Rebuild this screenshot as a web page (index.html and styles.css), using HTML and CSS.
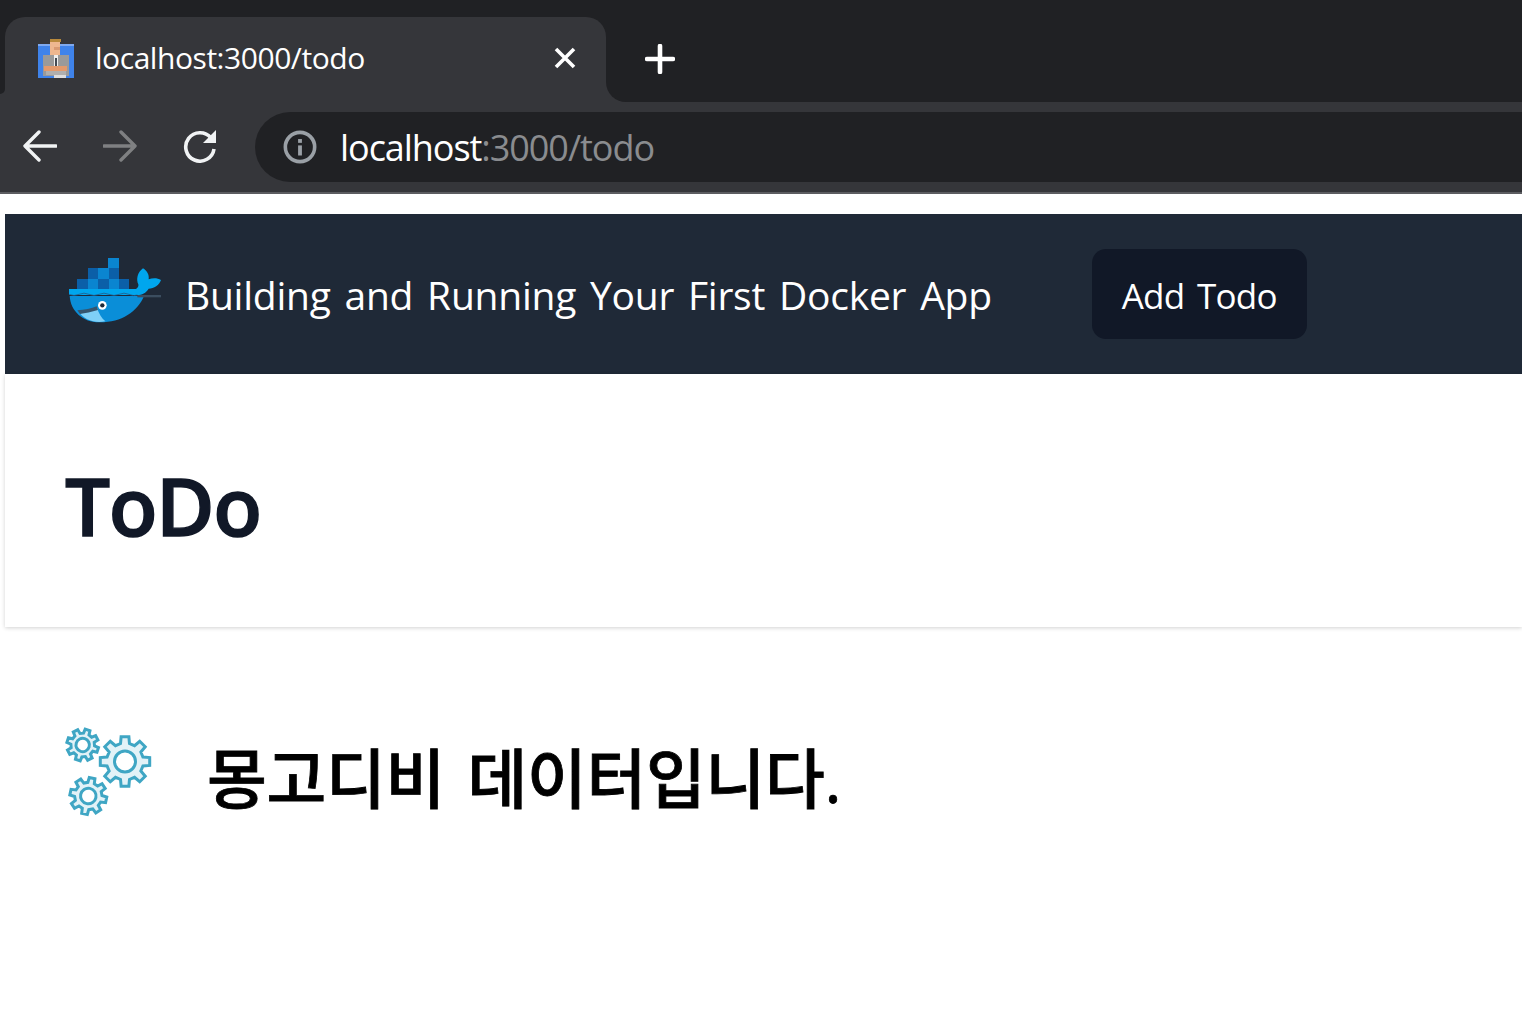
FILE: index.html
```html
<!DOCTYPE html>
<html lang="ko">
<head>
    <meta charset="UTF-8">
    <meta name="viewport" content="width=device-width, initial-scale=1.0">
    <title>ToDo</title>
    <link rel="stylesheet" href="styles.css">
</head>
<body>
    <div class="browser">
        <div class="tabstrip">
            <div class="strip-gap"></div>
            <div class="tab-slot">
                <div class="tab">
                    <svg class="favicon" viewBox="48 40 116 122" shape-rendering="crispEdges">
                        <rect x="52" y="58" width="106" height="100" fill="#3f83ea"/>
                        <rect x="52" y="58" width="106" height="6" fill="#7fa9ee"/>
                        <rect x="88" y="42" width="32" height="11" fill="#b98a3c"/>
                        <rect x="88" y="53" width="28" height="37" fill="#eeb78f"/>
                        <rect x="100" y="66" width="16" height="10" fill="#d99a72"/>
                        <rect x="67" y="92" width="76" height="60" fill="#9a9a9a"/>
                        <rect x="98" y="92" width="12" height="56" fill="#eeeeee"/>
                        <rect x="102" y="100" width="5" height="22" fill="#444a52"/>
                        <rect x="70" y="124" width="68" height="13" fill="#e39a6c"/>
                        <rect x="76" y="137" width="58" height="13" fill="#b0afae"/>
                        <rect x="100" y="150" width="34" height="8" fill="#dddddd"/>
                    </svg>
                    <span class="tab-title">localhost:3000/todo</span>
                    <svg class="tab-close" viewBox="0 0 22 22">
                        <path d="M2 2L20 20M20 2L2 20" stroke="#fff" stroke-width="3.6" fill="none"/>
                    </svg>
                </div>
            </div>
            <div class="strip-rest">
                <svg class="new-tab" viewBox="0 0 30 30">
                    <path d="M15 2V28M2 15H28" stroke="#fff" stroke-width="4.6" stroke-linecap="round" fill="none"/>
                </svg>
            </div>
        </div>
        <div class="toolbar">
            <svg class="nav-icon" viewBox="0 0 34 32">
                <path d="M33 16H3M16 2L2 16L16 30" stroke="#f1f3f4" stroke-width="3.4" stroke-linecap="round" stroke-linejoin="round" fill="none"/>
            </svg>
            <svg class="nav-icon nav-forward" viewBox="0 0 34 32">
                <path d="M1 16H31M18 2L32 16L18 30" stroke="#7f8082" stroke-width="3.4" stroke-linecap="round" stroke-linejoin="round" fill="none"/>
            </svg>
            <svg class="nav-icon nav-reload" viewBox="0 0 34 34">
                <path d="M28 9A14.2 14.2 0 1 0 31 20" stroke="#f1f3f4" stroke-width="3.6" fill="none"/>
                <path d="M33 1V14H20Z" fill="#f1f3f4"/>
            </svg>
            <div class="omnibox">
                <svg class="info-icon" viewBox="0 0 32 32">
                    <circle cx="16" cy="16" r="13.8" stroke="#9aa0a6" stroke-width="3.4" fill="none"/>
                    <rect x="14.2" y="14.5" width="3.6" height="9.5" fill="#9aa0a6"/>
                    <rect x="14.2" y="8.5" width="3.6" height="3.6" fill="#9aa0a6"/>
                </svg>
                <span class="url">localhost<span class="url-rest">:3000/todo</span></span>
            </div>
        </div>
    </div>

    <div class="page">
        <nav class="nav">
            <svg class="docker-logo" viewBox="57 36 276 198">
                <g shape-rendering="crispEdges">
                    <rect x="175" y="38" width="32" height="31" fill="#0a85d0"/>
                    <rect x="113" y="70" width="31" height="31" fill="#0b5fa8"/>
                    <rect x="144" y="70" width="32" height="31" fill="#0a85d0"/>
                    <rect x="176" y="70" width="31" height="31" fill="#0b5fa8"/>
                    <rect x="82" y="101" width="31" height="31" fill="#0b5fa8"/>
                    <rect x="113" y="101" width="31" height="31" fill="#0a85d0"/>
                    <rect x="144" y="101" width="32" height="31" fill="#0b5fa8"/>
                    <rect x="176" y="101" width="31" height="31" fill="#0a85d0"/>
                    <rect x="207" y="101" width="31" height="31" fill="#0b5fa8"/>
                </g>
                <path d="M59 153C62 200 100 233 150 232C215 232 262 200 282 153Z" fill="#0a8ed8"/>
                <path d="M86 200C105 197 125 194 141 188C146 205 155 220 166 229C130 236 102 222 86 200Z" fill="#7fd0f7"/>
                <path d="M82 196C103 195 125 190 140 184L144 195C125 201 105 205 90 207Z" fill="#35556e"/>
                <path d="M57 132H258C264 128 266 124 265 118C258 104 262 82 279 70C292 78 298 90 296 103C308 98 322 98 333 105C328 120 312 131 296 131C288 144 276 150 262 150H57Z" fill="#00a6ee"/>
                <path d="M57 148Q72 155 87 148T117 148T147 148T177 148T207 148T237 148T262 150" fill="none" stroke="#1f5f8e" stroke-width="2.5"/>
                <rect x="262" y="150" width="71" height="7" fill="#3b4d5f"/>
                <circle cx="157" cy="181" r="13" fill="#fff"/>
                <circle cx="157" cy="181" r="6.5" fill="#1f2937"/>
            </svg>
            <span class="nav-title">Building and Running Your First Docker App</span>
            <a class="nav-button">Add Todo</a>
        </nav>
        <header class="header">
            <h1>ToDo</h1>
        </header>
        <main class="main">
            <svg class="gears" viewBox="60 724 96 96">
                <defs>
                    <g id="gear">
                        <polygon vector-effect="non-scaling-stroke" points="71.8,-17.9 98.8,-15.6 98.8,15.6 71.8,17.9 63.4,38.1 80.9,58.8 58.8,80.9 38.1,63.4 17.9,71.8 15.6,98.8 -15.6,98.8 -17.9,71.8 -38.1,63.4 -58.8,80.9 -80.9,58.8 -63.4,38.1 -71.8,17.9 -98.8,15.6 -98.8,-15.6 -71.8,-17.9 -63.4,-38.1 -80.9,-58.8 -58.8,-80.9 -38.1,-63.4 -17.9,-71.8 -15.6,-98.8 15.6,-98.8 17.9,-71.8 38.1,-63.4 58.8,-80.9 80.9,-58.8 63.4,-38.1"/>
                        <circle class="gear-hole" vector-effect="non-scaling-stroke" r="42"/>
                    </g>
                </defs>
                <use href="#gear" class="gear-shape" transform="translate(125 761.5) scale(.25)"/>
                <use href="#gear" class="gear-shape" transform="translate(82.7 745) rotate(18) scale(.16)"/>
                <use href="#gear" class="gear-shape" transform="translate(88.3 796) rotate(12) scale(.185)"/>
            </svg>
            <h2>몽고디비 데이터입니다.</h2>
        </main>
    </div>
</body>
</html>
```

FILE: styles.css
```css
html,body{
    margin:0;
    height:100%;
    overflow:hidden;
    background-color:#fff;
    font-family:"Open Sans","Noto Sans CJK KR",sans-serif;
}
.tabstrip{
    height:102px;
    display:flex;
    background-color:#35363a;
}
.strip-gap{
    width:5px;
    height:94px;
    background-color:#202124;
    border-bottom-right-radius:12px;
}
.tab-slot{
    width:601px;
    padding-top:17px;
    background-color:#202124;
}
.tab{
    height:85px;
    box-sizing:border-box;
    padding:0 30px 4px 32px;
    display:flex;
    align-items:center;
    background-color:#35363a;
    border-radius:20px 20px 0 0;
}
.favicon{
    width:39px;
    height:41px;
    margin-top:1px;
}
.tab-title{
    margin-left:19px;
    flex:1;
    font-size:30px;
    letter-spacing:-0.45px;
    color:#fff;
}
.tab-close{
    width:22px;
    height:22px;
}
.strip-rest{
    flex:1;
    display:flex;
    align-items:center;
    padding-top:16px;
    background-color:#202124;
    border-bottom-left-radius:20px;
}
.new-tab{
    width:30px;
    height:30px;
    margin-left:39px;
}
.toolbar{
    height:90px;
    display:flex;
    align-items:center;
    padding-left:23px;
    background-color:#35363a;
    border-bottom:2px solid #5c5d61;
}
.nav-icon{
    width:34px;
    height:32px;
    flex:none;
    margin-top:-2px;
}
.nav-forward{
    margin-left:46px;
}
.nav-reload{
    margin-left:46px;
    height:34px;
}
.omnibox{
    flex:1;
    height:70px;
    margin-left:38px;
    padding-left:28px;
    display:flex;
    align-items:center;
    background-color:#202124;
    border-radius:35px 0 0 35px;
}
.info-icon{
    width:34px;
    height:34px;
}
.url{
    margin-left:23px;
    font-size:36px;
    letter-spacing:-1.05px;
    color:#fff;
}
.url-rest{
    color:#8a8c8f;
}
.page{
    padding:20px 0 0 5px;
}
.nav{
    height:160px;
    display:flex;
    align-items:center;
    padding-left:63px;
    background-color:#1f2937;
}
.docker-logo{
    width:94px;
    height:66px;
    margin-top:-8px;
    flex:none;
}
.nav-title{
    margin-left:23px;
    margin-top:1px;
    font-size:39px;
    letter-spacing:-0.25px;
    color:#fff;
    word-spacing:4px;
}
.nav-button{
    margin-left:100px;
    margin-top:-1px;
    width:215px;
    height:90px;
    box-sizing:border-box;
    padding-top:3px;
    display:flex;
    align-items:center;
    justify-content:center;
    border-radius:14px;
    background-color:#111827;
    font-size:35px;
    letter-spacing:-0.7px;
    color:#fff;
    word-spacing:4px;
}
.header{
    height:253px;
    box-sizing:border-box;
    padding:8px 0 0 60px;
    display:flex;
    align-items:center;
    box-shadow:rgba(0,0,0,0.18) 0px 1px 4px;
}
h1{
    margin:0;
    font-size:80px;
    font-weight:600;
    -webkit-text-stroke:1.4px #111827;
    letter-spacing:-1.5px;
    color:#111827;
}
.main{
    padding:97px 0 0 55px;
    display:flex;
    align-items:flex-start;
}
.gears{
    width:96px;
    height:96px;
    flex:none;
}
.gear-shape{
    fill:#e2f2f7;
    stroke:#3fa6c4;
    stroke-width:3;
}
.gear-hole{
    fill:#fff;
}
h2{
    margin:0 0 0 51px;
    font-size:65px;
    font-weight:500;
    -webkit-text-stroke:0.8px #000;
    letter-spacing:-0.3px;
    word-spacing:6px;
    line-height:108px;
    color:#000;
}
```
